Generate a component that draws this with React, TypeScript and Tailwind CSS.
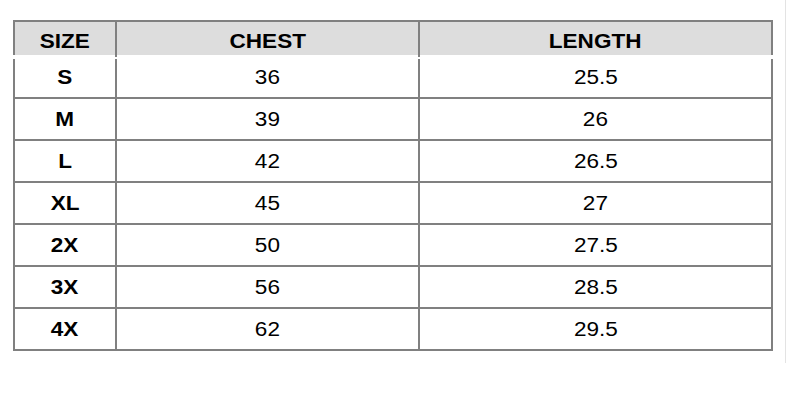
const rows = [
  { size: 'S', chest: '36', length: '25.5' },
  { size: 'M', chest: '39', length: '26' },
  { size: 'L', chest: '42', length: '26.5' },
  { size: 'XL', chest: '45', length: '27' },
  { size: '2X', chest: '50', length: '27.5' },
  { size: '3X', chest: '56', length: '28.5' },
  { size: '4X', chest: '62', length: '29.5' },
];

function Cell({ text, bold, pad }: { text: string; bold?: boolean; pad: string }) {
  return (
    <div className={'flex items-center justify-center ' + pad + (bold ? ' font-bold' : '')}>
      <span className="inline-block scale-x-[1.1]">{text}</span>
    </div>
  );
}

export default function App() {
  return (
    <div
      className="w-[786px] h-[363px] bg-white border-r border-[#e3e3e3] pl-[13px] pt-[20px] text-black text-[20.5px]"
      style={{ fontFamily: '"Liberation Sans", Arial, sans-serif' }}
    >
      <div className="w-[760px]">
        {/* header */}
        <div className="grid grid-cols-[100px_2px_301px_2px_351px] h-[35px] border-t-2 border-x-2 border-[#808080] bg-[#dddddd]">
          <Cell text="SIZE" bold pad="pt-[4px]" />
          <div className="bg-[#808080]" />
          <Cell text="CHEST" bold pad="pt-[4px]" />
          <div className="bg-[#808080]" />
          <Cell text="LENGTH" bold pad="pt-[4px]" />
        </div>

        {/* body */}
        <div className="mt-[4px] border-x-2 border-b-2 border-[#808080]">
          {rows.map((r, i) => {
            const pad = i === 0 ? 'pb-[2px]' : 'pt-[1px]';
            return (
              <div
                key={r.size}
                className={
                  'grid grid-cols-[100px_2px_301px_2px_351px] ' +
                  (i === 0 ? 'h-[38px]' : 'h-[42px] border-t-2 border-[#808080]')
                }
              >
                <Cell text={r.size} bold pad={pad} />
                <div className="bg-[#808080]" />
                <Cell text={r.chest} pad={pad} />
                <div className="bg-[#808080]" />
                <Cell text={r.length} pad={pad} />
              </div>
            );
          })}
        </div>
      </div>
    </div>
  );
}
